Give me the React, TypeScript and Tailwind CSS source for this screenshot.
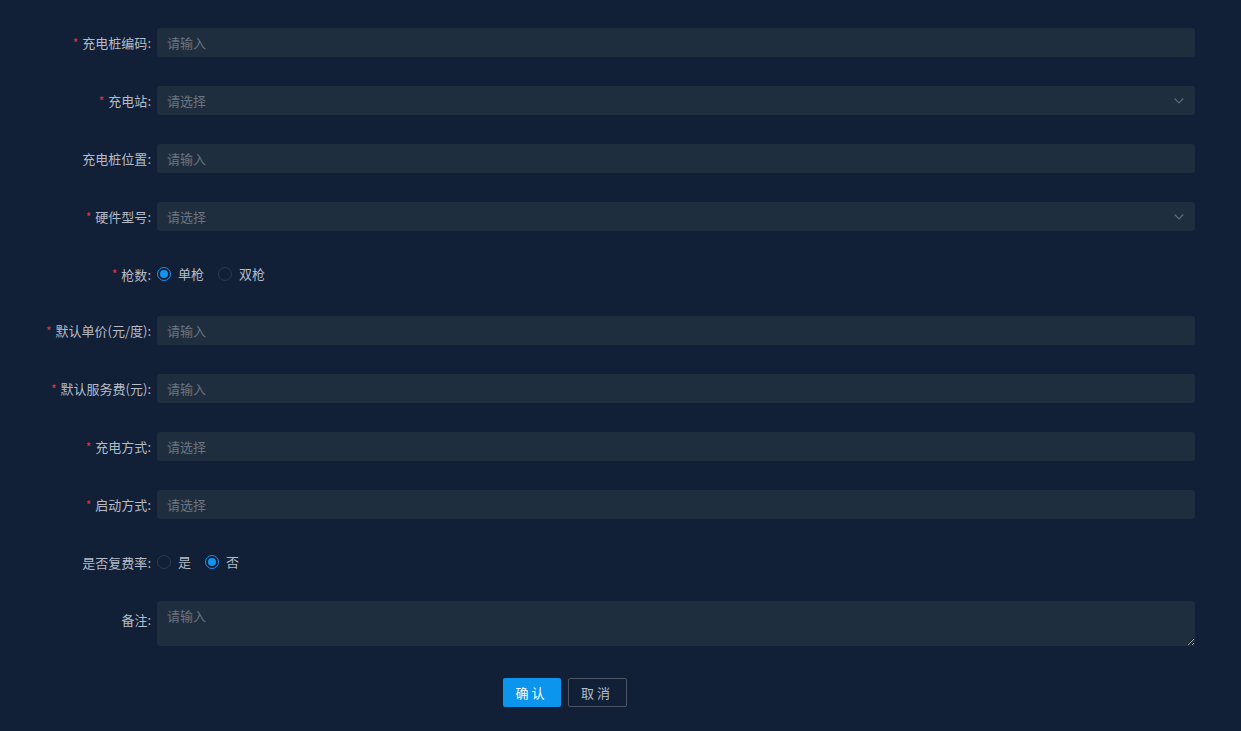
import React from 'react';

const font = { fontFamily: '"Noto Sans CJK SC", "Noto Sans", sans-serif' };

function Label({ text, required }: { text: string; required?: boolean }) {
  return (
    <div className="w-[157px] shrink-0 pr-[6px] flex justify-end items-center text-[13px] text-[#b5bcc7] leading-none">
      {required && <span className="text-[#e2323a] mr-[4px] text-[12px]">*</span>}
      <span>{text}:</span>
    </div>
  );
}

function Input({ placeholder, select }: { placeholder: string; select?: boolean }) {
  return (
    <div className="flex-1 h-[29px] bg-[#1f2e3f] rounded-[3px] flex items-center pl-[10px] pr-[11px] text-[13px] text-[#6b7480]">
      <span className="flex-1">{placeholder}</span>
      {select && (
        <svg width="10" height="8" viewBox="0 0 10 8">
          <path d="M0.7 1.5 L5 6 L9.3 1.5" fill="none" stroke="#5f6c7c" strokeWidth="1.1" />
        </svg>
      )}
    </div>
  );
}

function Radio({ label, checked }: { label: string; checked?: boolean }) {
  return (
    <label className="flex items-center mr-[14px]">
      {checked ? (
        <span className="w-[14px] h-[14px] rounded-full border border-[#1593ee] flex items-center justify-center">
          <span className="w-[8px] h-[8px] rounded-full bg-[#1593ee]" />
        </span>
      ) : (
        <span className="w-[14px] h-[14px] rounded-full border border-[#2e3a48]" />
      )}
      <span className="ml-[7px] text-[13px] text-[#b5bcc7]">{label}</span>
    </label>
  );
}

function Row({ label, required, children }: { label: string; required?: boolean; children: React.ReactNode }) {
  return (
    <div className="flex items-stretch mb-[29px]">
      <Label text={label} required={required} />
      {children}
    </div>
  );
}

export default function App() {
  return (
    <div className="min-h-[731px] w-full bg-[#112036] pt-[28px] pr-[46px]" style={font}>
      <Row label="充电桩编码" required>
        <Input placeholder="请输入" />
      </Row>
      <Row label="充电站" required>
        <Input placeholder="请选择" select />
      </Row>
      <Row label="充电桩位置">
        <Input placeholder="请输入" />
      </Row>
      <Row label="硬件型号" required>
        <Input placeholder="请选择" select />
      </Row>
      <div className="flex items-center h-[28px] mb-[28px]">
        <Label text="枪数" required />
        <Radio label="单枪" checked />
        <Radio label="双枪" />
      </div>
      <Row label="默认单价(元/度)" required>
        <Input placeholder="请输入" />
      </Row>
      <Row label="默认服务费(元)" required>
        <Input placeholder="请输入" />
      </Row>
      <Row label="充电方式" required>
        <Input placeholder="请选择" />
      </Row>
      <Row label="启动方式" required>
        <Input placeholder="请选择" />
      </Row>
      <div className="flex items-center h-[28px] mb-[25px]">
        <Label text="是否复费率" />
        <Radio label="是" />
        <Radio label="否" checked />
      </div>
      <div className="flex items-start">
        <div className="w-[157px] shrink-0 pr-[6px] pt-[12px] flex justify-end text-[13px] text-[#b5bcc7] leading-none">
          备注:
        </div>
        <textarea
          placeholder="请输入"
          className="flex-1 h-[45px] bg-[#1f2e3f] rounded-[3px] px-[10px] py-[5px] text-[13px] text-[#b5bcc7] placeholder:text-[#6b7480] outline-none resize-y"
        />
      </div>
      <div className="flex justify-center gap-[7px] mt-[32px] pr-[66px]">
        <button className="w-[58px] h-[29px] bg-[#0b95ec] rounded-[2px] text-white text-[13px] tracking-[3px]">
          确认
        </button>
        <button className="w-[59px] h-[29px] border border-[#4b5563] rounded-[2px] text-[#b5bcc7] text-[13px] tracking-[3px]">
          取消
        </button>
      </div>
    </div>
  );
}
